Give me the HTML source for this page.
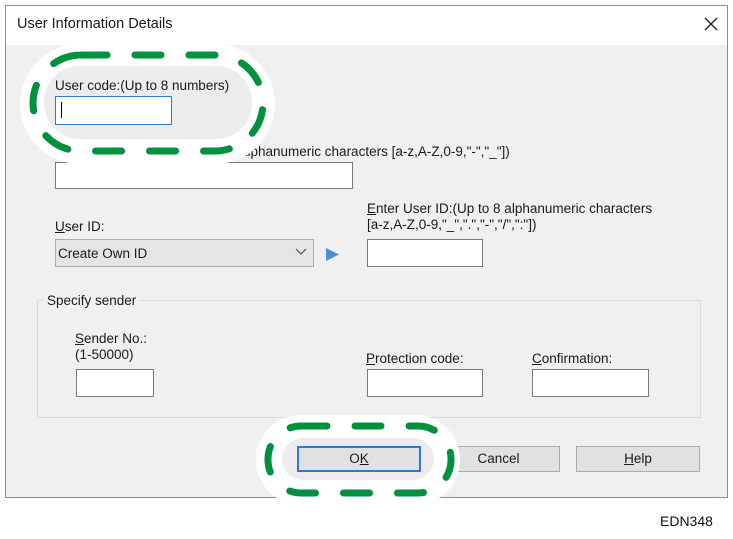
<!DOCTYPE html>
<html><head><meta charset="utf-8"><style>
*{margin:0;padding:0;box-sizing:border-box}
body{width:733px;height:539px;background:#fff;position:relative;overflow:hidden;font-family:"Liberation Sans",sans-serif;font-size:13.5px;color:#1a1a1a}
.a{position:absolute;white-space:nowrap}
.dlg{position:absolute;left:5px;top:5px;width:723px;height:493px;border:1px solid #5a9ad8;background:#f0f0f0}
.tb{position:absolute;left:6px;top:6px;width:721px;height:39px;background:#fff}
.in{position:absolute;background:#fff;border:1px solid #7a7a7a}
.btn{position:absolute;background:#e1e1e1;border:1px solid #adadad;text-align:center;line-height:24px;font-size:13.5px}
u{text-decoration:underline}
</style></head><body>
<div class="dlg"></div>
<div class="tb"></div>
<div class="a" style="left:17px;top:16px;font-size:14.5px">User Information Details</div>
<svg class="a" style="left:703px;top:16px" width="16" height="16"><path d="M2 2L14 14M14 2L2 14" stroke="#222" stroke-width="1.3"/></svg>

<div class="a" style="left:240px;top:144px">alphanumeric characters [a-z,A-Z,0-9,"-","_"])</div>
<div class="in" style="left:55px;top:162px;width:298px;height:27px"></div>

<div class="a" style="left:55px;top:219px"><u>U</u>ser ID:</div>
<div class="a" style="left:55px;top:239px;width:259px;height:28px;background:#e5e5e5;border:1px solid #adadad"></div>
<div class="a" style="left:58px;top:246px;font-size:13.5px">Create Own ID</div>
<svg class="a" style="left:295px;top:248px" width="12" height="8"><path d="M1 1L6 6L11 1" stroke="#555" fill="none" stroke-width="1.2"/></svg>
<svg class="a" style="left:326px;top:248px" width="14" height="13"><path d="M0 0L13 6.5L0 13Z" fill="#4a90d9"/></svg>

<div class="a" style="left:367px;top:201px"><u>E</u>nter User ID:(Up to 8 alphanumeric characters</div>
<div class="a" style="left:367px;top:217px">[a-z,A-Z,0-9,"_",".","-","/",":"])</div>
<div class="in" style="left:367px;top:239px;width:116px;height:28px"></div>

<div class="a" style="left:37px;top:300px;width:664px;height:118px;border:1px solid #dcdcdc"></div>
<div class="a" style="left:44px;top:293px;background:#f0f0f0;padding:0 3px">Specify sender</div>
<div class="a" style="left:75px;top:331px"><u>S</u>ender No.:</div>
<div class="a" style="left:75px;top:347px">(1-50000)</div>
<div class="in" style="left:76px;top:369px;width:78px;height:28px"></div>
<div class="a" style="left:366px;top:351px"><u>P</u>rotection code:</div>
<div class="in" style="left:367px;top:369px;width:116px;height:28px"></div>
<div class="a" style="left:532px;top:351px"><u>C</u>onfirmation:</div>
<div class="in" style="left:532px;top:369px;width:117px;height:28px"></div>

<div class="btn" style="left:437px;top:446px;width:123px;height:26px">Cancel</div>
<div class="btn" style="left:576px;top:446px;width:124px;height:26px"><u>H</u>elp</div>

<svg class="a" style="left:0;top:0" width="733" height="539">
<rect x="20" y="44" width="255" height="120" rx="60" fill="#fff"/>
<rect x="44" y="66" width="208" height="73" rx="36" fill="#ececec"/>
<rect x="33" y="55" width="230" height="96" rx="48" fill="none" stroke="#009140" stroke-width="7" stroke-linecap="round" stroke-dasharray="26 28"/>
<rect x="256" y="415" width="204" height="90" rx="45" fill="#fff"/>
<rect x="282" y="438" width="152" height="42" rx="21" fill="#ececec"/>
<rect x="268" y="426" width="183" height="67" rx="33" fill="none" stroke="#009140" stroke-width="7" stroke-linecap="round" stroke-dasharray="26 28"/>
<rect x="0" y="498" width="733" height="41" fill="#fff"/>
</svg>
<div class="a" style="left:55px;top:78px">User code:(Up to 8 numbers)</div>
<div class="in" style="left:55px;top:96px;width:117px;height:29px;border-color:#2f7ad0"></div>
<div class="a" style="left:61px;top:102px;width:1px;height:16px;background:#000"></div>
<div class="btn" style="left:297px;top:446px;width:124px;height:26px;border:2px solid #2f7ad0;line-height:22px">O<u>K</u></div>
<div class="a" style="left:660px;top:513px;font-size:14px;color:#111">EDN348</div>
</body></html>
